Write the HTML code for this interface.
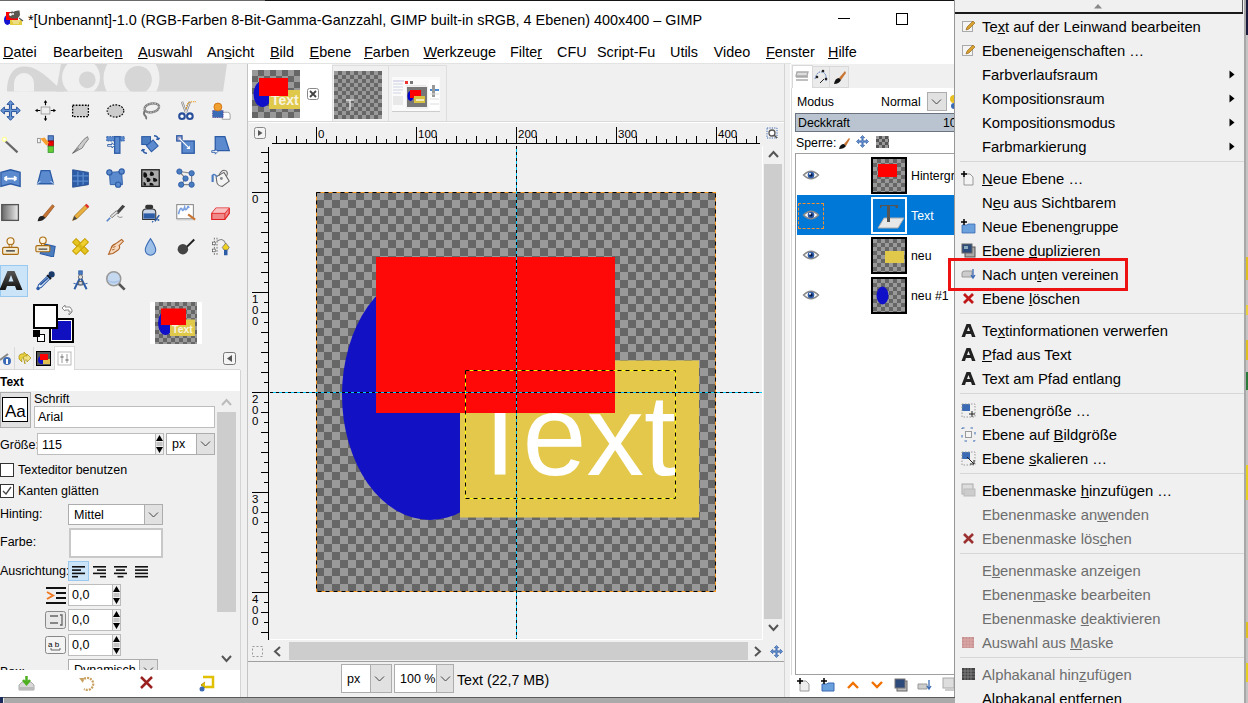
<!DOCTYPE html><html><head><meta charset="utf-8"><style>
*{margin:0;padding:0;box-sizing:border-box}
html,body{width:1248px;height:703px;overflow:hidden;background:#f0f0f0;font-family:"Liberation Sans", sans-serif}
body>div,body>span,body>svg{position:absolute}
.t{position:absolute;white-space:nowrap;line-height:1;}
u{text-decoration:underline;text-decoration-thickness:1px;text-underline-offset:0.6px}
</style></head><body>
<div style="left:0px;top:0px;width:955px;height:38px;background:#fff"></div>
<div style="left:0px;top:0px;width:265px;height:1px;background:#6a6a6a"></div>
<div style="left:265px;top:0px;width:690px;height:1px;background:#141414"></div>
<div style="left:0px;top:38px;width:955px;height:25px;background:#fff"></div>
<div style="left:0px;top:63px;width:955px;height:1px;background:#e3e3e3"></div>
<svg style="left:0px;top:6px" width="26" height="22" viewBox="0 0 26 22">
<ellipse cx="7.5" cy="14" rx="3.5" ry="5" fill="#1414d0"/><rect x="6" y="6" width="12" height="8" fill="#f00"/>
<rect x="10" y="14" width="12" height="5" fill="#e4cc40"/><path d="M12 15 h8 M13 17 h6" stroke="#f4f0c0" stroke-width="1"/>
<path d="M8.5 9 Q10 5 12 6 L11.5 4.5 L13 6 Q16 4 19.5 4.5 L20 9 Q19 12 17 12.5 L12 12.5 Q9 12 8.5 9Z" fill="#5a5650"/>
<circle cx="10.5" cy="8.5" r="1.4" fill="#fff"/><circle cx="13" cy="8" r="1" fill="#fff"/><path d="M19 12 L23 15" stroke="#555" stroke-width="1.2"/></svg>
<span class="t" style="left:28px;top:12.81px;font-size:14.4px;color:#000;">*[Unbenannt]-1.0 (RGB-Farben 8-Bit-Gamma-Ganzzahl, GIMP built-in sRGB, 4 Ebenen) 400x400 – GIMP</span>
<div style="left:838px;top:18px;width:12px;height:1px;background:#000"></div>
<div style="left:896px;top:13px;width:12px;height:12px;border:1px solid #000"></div>
<span class="t" style="left:3px;top:44.81px;font-size:14.4px;color:#000;"><u>D</u>atei</span>
<span class="t" style="left:53px;top:44.81px;font-size:14.4px;color:#000;">Bearbeite<u>n</u></span>
<span class="t" style="left:138px;top:44.81px;font-size:14.4px;color:#000;"><u>A</u>uswahl</span>
<span class="t" style="left:207px;top:44.81px;font-size:14.4px;color:#000;">An<u>s</u>icht</span>
<span class="t" style="left:270px;top:44.81px;font-size:14.4px;color:#000;"><u>B</u>ild</span>
<span class="t" style="left:309.6px;top:44.81px;font-size:14.4px;color:#000;"><u>E</u>bene</span>
<span class="t" style="left:364px;top:44.81px;font-size:14.4px;color:#000;"><u>F</u>arben</span>
<span class="t" style="left:423.5px;top:44.81px;font-size:14.4px;color:#000;"><u>W</u>erkzeuge</span>
<span class="t" style="left:510px;top:44.81px;font-size:14.4px;color:#000;">Filte<u>r</u></span>
<span class="t" style="left:557px;top:44.81px;font-size:14.4px;color:#000;">CFU</span>
<span class="t" style="left:597px;top:44.81px;font-size:14.4px;color:#000;">Script-Fu</span>
<span class="t" style="left:670px;top:44.81px;font-size:14.4px;color:#000;">Utils</span>
<span class="t" style="left:713.7px;top:44.81px;font-size:14.4px;color:#000;">Video</span>
<span class="t" style="left:766px;top:44.81px;font-size:14.4px;color:#000;"><u>F</u>enster</span>
<span class="t" style="left:828px;top:44.81px;font-size:14.4px;color:#000;"><u>H</u>ilfe</span>
<svg style="left:0px;top:64px" width="240" height="28" viewBox="0 0 240 28">
<defs><clipPath id="wc"><rect x="0" y="0" width="240" height="27.5"/></clipPath></defs>
<g clip-path="url(#wc)">
<path d="M7 28 C7 12 13 2.5 24 2.5 C36 2.5 44 10 56 21 L64 28Z" fill="#d6d6d6"/>
<path d="M61 0 L227 0 L223 28 L56 28Z" fill="#d6d6d6"/>
<circle cx="24" cy="19" r="10" fill="#f0f0f0"/><rect x="14" y="19" width="20" height="10" fill="#f0f0f0"/>
<circle cx="81" cy="13.4" r="19" fill="#f0f0f0"/>
<circle cx="131.5" cy="14.3" r="28" fill="#f0f0f0"/>
<circle cx="87.3" cy="15.8" r="8.4" fill="#d6d6d6"/>
<circle cx="138.2" cy="15.8" r="13.7" fill="#d6d6d6"/>
</g></svg>
<div style="left:0px;top:265px;width:28px;height:32px;background:#cce4f7;border:1px solid #99c9ef"></div>
<svg style="left:0.0px;top:100.0px" width="21" height="21" viewBox="0 0 24 24"><path d="M12 0.8 L16 5 L13.2 5 L13.2 10.8 L19 10.8 L19 8 L23.2 12 L19 16 L19 13.2 L13.2 13.2 L13.2 19 L16 19 L12 23.2 L8 19 L10.8 19 L10.8 13.2 L5 13.2 L5 16 L0.8 12 L5 8 L5 10.8 L10.8 10.8 L10.8 5 L8 5Z" fill="#6a96d4" stroke="#22509a" stroke-width="1.1" stroke-linejoin="miter"/></svg>
<svg style="left:35.0px;top:100.0px" width="21" height="21" viewBox="0 0 24 24"><rect x="7" y="8" width="10" height="8" fill="#eee" stroke="#999"/><path d="M12 1 V6 M12 18 V23 M1 12 H6 M18 12 H23" stroke="#000" stroke-width="1.3"/><path d="M10 3 L12 0 L14 3Z M10 21 L12 24 L14 21Z M3 10 L0 12 L3 14Z M21 10 L24 12 L21 14Z" fill="#000"/></svg>
<svg style="left:70.0px;top:100.0px" width="21" height="21" viewBox="0 0 24 24"><rect x="3" y="6" width="18" height="13" fill="#ccc" stroke="#000" stroke-width="1.5" stroke-dasharray="2 1.5"/></svg>
<svg style="left:105.0px;top:100.0px" width="21" height="21" viewBox="0 0 24 24"><ellipse cx="12" cy="12.5" rx="9.5" ry="7" fill="#ccc" stroke="#000" stroke-width="1.3" stroke-dasharray="2 1.5"/></svg>
<svg style="left:140.0px;top:100.0px" width="21" height="21" viewBox="0 0 24 24"><ellipse cx="13.5" cy="9" rx="8.5" ry="5" fill="none" stroke="#777" stroke-width="2.6" transform="rotate(-12 13.5 9)"/><ellipse cx="13.5" cy="9" rx="8.5" ry="5" fill="none" stroke="#ddd" stroke-width="1" stroke-dasharray="1.5 1.5" transform="rotate(-12 13.5 9)"/><path d="M6 12 Q3 15 6 18 Q8 20 7 22" stroke="#777" stroke-width="2.2" fill="none"/></svg>
<svg style="left:175.0px;top:100.0px" width="21" height="21" viewBox="0 0 24 24"><path d="M8 2 L12.5 14 M17 2 L12.5 14" stroke="#888" stroke-width="2.6"/><path d="M8 2 L12.5 14 M17 2 L12.5 14" stroke="#eee" stroke-width="1"/><path d="M13 10 Q13 2 20 2 L24 2" stroke="#e8900a" stroke-width="1.2" stroke-dasharray="1.5 1" fill="none"/><circle cx="8" cy="18.5" r="3.2" fill="#fff" stroke="#2a4f9a" stroke-width="2.4"/><circle cx="17" cy="18.5" r="3.2" fill="#fff" stroke="#2a4f9a" stroke-width="2.4"/></svg>
<svg style="left:210.0px;top:100.0px" width="21" height="21" viewBox="0 0 24 24"><path d="M14 14 h6 q3 0 3 3 v5 h-9Z" fill="#fff" stroke="#999"/><rect x="3" y="12" width="12" height="8" fill="#3b6bb5" stroke="#5a3a8a" stroke-dasharray="1 1"/><circle cx="9" cy="8" r="4.5" fill="#f0a030" stroke="#d07010"/></svg>
<svg style="left:0.0px;top:134.0px" width="21" height="21" viewBox="0 0 24 24"><path d="M6 8 L20 21" stroke="#666" stroke-width="2.5"/><circle cx="5" cy="6" r="3" fill="#ffff99"/><circle cx="5" cy="6" r="1.5" fill="#fff"/></svg>
<svg style="left:35.0px;top:134.0px" width="21" height="21" viewBox="0 0 24 24"><rect x="15" y="2" width="6" height="6" fill="#5b86c8" stroke="#234a90"/><rect x="15" y="8" width="6" height="6" fill="#e00" stroke="#900"/><rect x="15" y="14" width="6" height="7" fill="#6c3" stroke="#393"/><rect x="3" y="5" width="3" height="5" fill="#fff" stroke="#888"/><path d="M6 5 L11 4 L16 10 L13 13Z" fill="#f7a030"/></svg>
<svg style="left:70.0px;top:134.0px" width="21" height="21" viewBox="0 0 24 24"><path d="M3 22 L11 12 L16 6 L20 3 L21 6 L17 11 L14 16Z" fill="#ccc" stroke="#777"/><path d="M3 22 L10 16" stroke="#555"/></svg>
<svg style="left:105.0px;top:134.0px" width="21" height="21" viewBox="0 0 24 24"><rect x="2" y="3" width="20" height="5" fill="#5b8ace" stroke="#2d5ca6" stroke-dasharray="2 1"/><rect x="11" y="3" width="6" height="19" fill="#5b8ace" stroke="#2d5ca6" stroke-width="1.5"/><path d="M3 12 h5 v-2 l3 3 l-3 3 v-2 h-5Z" fill="#fff" stroke="#2d5ca6"/></svg>
<svg style="left:140.0px;top:134.0px" width="21" height="21" viewBox="0 0 24 24"><rect x="2" y="3" width="10" height="9" fill="#4a7cc0" stroke="#2d5ca6" stroke-width="1.2"/><rect x="9" y="9" width="10" height="9" fill="#5b8ace" stroke="#2d5ca6" stroke-width="1.2" transform="rotate(-40 14 13.5)"/><path d="M16 2 q4 0 5 4 l1.5 -1.5 M21 6 l-2.5 0" stroke="#2d5ca6" fill="none" stroke-width="1.6"/><path d="M8 22 q-4 0 -5 -4 l-1.5 1.5 M3 18 l2.5 0" stroke="#2d5ca6" fill="none" stroke-width="1.6"/></svg>
<svg style="left:175.0px;top:134.0px" width="21" height="21" viewBox="0 0 24 24"><rect x="8" y="8" width="14" height="14" fill="#5b8ace" stroke="#2d5ca6" stroke-width="1.5"/><rect x="2" y="2" width="6" height="6" fill="#aac" stroke="#2d5ca6" stroke-width="1.5"/><path d="M5 5 L17 17" stroke="#fff" stroke-width="1.5"/><path d="M17 17 l-4 0 l4 -4Z" fill="#fff"/></svg>
<svg style="left:210.0px;top:134.0px" width="21" height="21" viewBox="0 0 24 24"><path d="M6 3 L17 3 L22 19 L6 19Z" fill="#5b8ace" stroke="#2d5ca6" stroke-width="1.5"/><path d="M2 19 h4 v-2 l3 3 l-3 3 v-2 h-4Z" fill="#fff" stroke="#2d5ca6"/></svg>
<svg style="left:0.0px;top:168.0px" width="21" height="21" viewBox="0 0 24 24"><path d="M1 5 L12 2 L23 5 L23 21 L12 18 L1 21Z" fill="#5b8ace" stroke="#2d5ca6" stroke-width="1.5"/><path d="M5 12 h14 M5 12 l3 -2.5 M5 12 l3 2.5 M19 12 l-3 -2.5 M19 12 l-3 2.5" stroke="#fff" stroke-width="2"/></svg>
<svg style="left:35.0px;top:168.0px" width="21" height="21" viewBox="0 0 24 24"><path d="M7 3 L17 3 L21 18 L3 18Z" fill="#5b8ace" stroke="#2d5ca6" stroke-width="1.5"/><path d="M3 18 l3 -3 M21 18 l-3 -3" stroke="#fff"/></svg>
<svg style="left:70.0px;top:168.0px" width="21" height="21" viewBox="0 0 24 24"><path d="M3 2 L21 5 L21 19 L3 22Z" fill="#2d5ca6" stroke="#234a90"/><path d="M9 4 v16 M15 5 v14 M3 9 h18 M3 15 h18" stroke="#5b8ace" stroke-width="1.5"/></svg>
<svg style="left:105.0px;top:168.0px" width="21" height="21" viewBox="0 0 24 24"><path d="M5 5 L19 4 L20 19 L6 19Z" fill="#5b8ace" stroke="#2d5ca6"/><circle cx="5" cy="5" r="3" fill="#5b8ace" stroke="#2d5ca6" stroke-width="1.3"/><circle cx="19" cy="4" r="3" fill="#5b8ace" stroke="#2d5ca6" stroke-width="1.3"/><circle cx="15" cy="19" r="3" fill="#5b8ace" stroke="#2d5ca6" stroke-width="1.3"/></svg>
<svg style="left:140.0px;top:168.0px" width="21" height="21" viewBox="0 0 24 24"><rect x="2" y="2" width="20" height="19" fill="#aaa" stroke="#222" stroke-width="1.5"/><path d="M4 5 q3 -1 4 2 q1 3 -2 4 q-3 0 -2 -6Z M12 4 q4 0 4 4 q-3 2 -5 0Z M7 11 q3 -1 5 2 q0 3 -4 3Z M15 11 q4 0 5 3 q-2 3 -5 1Z M4 16 q3 0 3 4 h-3Z M11 17 q4 -1 5 3 h-5Z" fill="#111"/></svg>
<svg style="left:175.0px;top:168.0px" width="21" height="21" viewBox="0 0 24 24"><path d="M5 4 L19 6 L19 19 L7 19 L12 12 L5 4Z" fill="none" stroke="#888" stroke-width="1.4"/><circle cx="5" cy="4" r="3" fill="#4a7cc0" stroke="#2d5ca6"/><circle cx="19" cy="6" r="3" fill="#4a7cc0" stroke="#2d5ca6"/><circle cx="12" cy="12" r="3" fill="#4a7cc0" stroke="#2d5ca6"/><circle cx="7" cy="19" r="3" fill="#4a7cc0" stroke="#2d5ca6"/><circle cx="19" cy="19" r="3" fill="#4a7cc0" stroke="#2d5ca6"/></svg>
<svg style="left:210.0px;top:168.0px" width="21" height="21" viewBox="0 0 24 24"><path d="M7 10 L16 5 L22 15 L14 21 Q10 21 8 17Z" fill="#f4f4f4" stroke="#666" stroke-width="1.2"/><path d="M10 9 Q13 1 18 3 Q21 5 19 9" fill="none" stroke="#666" stroke-width="1.2"/><circle cx="13" cy="12" r="1.6" fill="#888"/><path d="M3 8 v8" stroke="#4a7cc0" stroke-width="2.5"/><path d="M3 8 Q5 6 8 10" stroke="#4a7cc0" stroke-width="1.5" fill="none"/></svg>
<svg style="left:0.0px;top:202.0px" width="21" height="21" viewBox="0 0 24 24"><defs><linearGradient id="g1"><stop offset="0" stop-color="#666"/><stop offset="1" stop-color="#eee"/></linearGradient></defs><rect x="2" y="3" width="19" height="18" fill="url(#g1)" stroke="#555" stroke-width="1.5"/></svg>
<svg style="left:35.0px;top:202.0px" width="21" height="21" viewBox="0 0 24 24"><path d="M9 16 L20 3 L22 5 L12 18Z" fill="#c87533" stroke="#8a4a1a" stroke-width=".8"/><path d="M3 22 Q4 15 9 16 L12 18 Q9 22 3 22Z" fill="#222"/></svg>
<svg style="left:70.0px;top:202.0px" width="21" height="21" viewBox="0 0 24 24"><path d="M3 21 L5 16 L18 3 L21 6 L8 19Z" fill="#e8b040" stroke="#9a6a10" stroke-width=".8"/><path d="M17 4 L20 7 L22 5 L19 2Z" fill="#e03030"/><path d="M3 21 L5 16 L8 19Z" fill="#444"/></svg>
<svg style="left:105.0px;top:202.0px" width="21" height="21" viewBox="0 0 24 24"><path d="M12 12 L20 3 L23 5 L15 14Z" fill="#444"/><path d="M6 16 L13 10 L15 12 L8 18Z" fill="#ddd" stroke="#777"/><path d="M2 22 L6 18" stroke="#5b86c8" stroke-width="2"/><path d="M14 16 q3 3 6 1" stroke="#888" fill="none"/></svg>
<svg style="left:140.0px;top:202.0px" width="21" height="21" viewBox="0 0 24 24"><rect x="6" y="3" width="9" height="5" rx="2" fill="#333"/><path d="M3 12 Q3 8 7 8 L14 8 Q18 8 18 12 L18 20 L3 20Z" fill="#c8d4e8" stroke="#333" stroke-width="1.2"/><rect x="4" y="13" width="13" height="6" fill="#2d5ca6"/><path d="M17 22 L22 15 M20 20 l2 1 M15 23 l-1 -1" stroke="#2d5ca6" stroke-width="1.8"/></svg>
<svg style="left:175.0px;top:202.0px" width="21" height="21" viewBox="0 0 24 24"><rect x="2" y="3" width="19" height="16" fill="#fff" stroke="#888" stroke-width="1.2"/><rect x="2" y="19" width="19" height="2" fill="#ccc"/><path d="M4 14 q2 -9 4 -6 q1 4 3 -2 q1 5 3 1 q1 -4 2 0" stroke="#7aa0e0" stroke-width="1.8" fill="none"/><path d="M15 14 L23 20" stroke="#c87533" stroke-width="2.5"/></svg>
<svg style="left:210.0px;top:202.0px" width="21" height="21" viewBox="0 0 24 24"><path d="M2 13 L7 7 L22 7 L22 13 L17 20 L2 20Z" fill="#f08a8a" stroke="#e02020" stroke-width="1.4" stroke-linejoin="round"/><path d="M7 7 L22 7 L17 13 L2 13Z" fill="#f8c0c0"/><path d="M2 13 L17 13 L22 7 M17 13 L17 20" stroke="#e02020" fill="none" stroke-width="1"/></svg>
<svg style="left:0.0px;top:236.0px" width="21" height="21" viewBox="0 0 24 24"><circle cx="12" cy="6" r="4" fill="#fff4e0" stroke="#a86a10" stroke-width="1.3"/><rect x="10.5" y="9.5" width="3" height="4" fill="#f4e4c0" stroke="#a86a10"/><rect x="3" y="13" width="18" height="8" rx="1.5" fill="#f4ead0" stroke="#a86a10" stroke-width="1.3"/><path d="M7 17 h10" stroke="#333" stroke-width="1.5"/></svg>
<svg style="left:35.0px;top:236.0px" width="21" height="21" viewBox="0 0 24 24"><path d="M10 9 L23 12 L21 24 L6 20Z" fill="#4a7cc0" stroke="#2d5ca6" stroke-width="1.3"/><circle cx="9" cy="5" r="3.8" fill="#fff4e0" stroke="#a86a10" stroke-width="1.3"/><rect x="7.5" y="8.5" width="3" height="3" fill="#f4e4c0" stroke="#a86a10"/><rect x="1" y="11" width="16" height="7" rx="1.5" fill="#f4ead0" stroke="#a86a10" stroke-width="1.3"/><path d="M4 15 h10" stroke="#333" stroke-width="1.3"/></svg>
<svg style="left:70.0px;top:236.0px" width="21" height="21" viewBox="0 0 24 24"><path d="M3 7 L7 3 L21 17 L17 21Z" fill="#e6c520" stroke="#c8a000" stroke-width="1.2" stroke-linejoin="round"/><path d="M17 3 L21 7 L7 21 L3 17Z" fill="#f0d030" stroke="#c8a000" stroke-width="1.2" stroke-linejoin="round"/><rect x="10" y="10" width="4" height="4" fill="#d8b818" transform="rotate(45 12 12)"/></svg>
<svg style="left:105.0px;top:236.0px" width="21" height="21" viewBox="0 0 24 24"><path d="M4 21 L7 14 Q8 10 12 9 L19 4 L21 6 L16 11 Q18 13 15 16 L9 20Z" fill="#f5d8c0" stroke="#b06020" stroke-width="1.2"/><path d="M9 13 L12 12 M8 16 L11 15" stroke="#b06020"/></svg>
<svg style="left:140.0px;top:236.0px" width="21" height="21" viewBox="0 0 24 24"><path d="M12 3 Q18 12 18 16 A6 6 0 0 1 6 16 Q6 12 12 3Z" fill="#9cc0e8" stroke="#3b6bb5" stroke-width="1.2"/></svg>
<svg style="left:175.0px;top:236.0px" width="21" height="21" viewBox="0 0 24 24"><path d="M11 15 L22 4" stroke="#222" stroke-width="2.2"/><circle cx="9" cy="15" r="6" fill="#444"/></svg>
<svg style="left:210.0px;top:236.0px" width="21" height="21" viewBox="0 0 24 24"><path d="M5 2 v20 M8 2 v20" stroke="#666" stroke-width="1" stroke-dasharray="2 1.5"/><rect x="3" y="7" width="3" height="3" fill="#fff" stroke="#555" stroke-width=".8"/><rect x="3" y="15" width="3" height="3" fill="#fff" stroke="#555" stroke-width=".8"/><path d="M8 6 Q15 1 18 9" stroke="#888" fill="none" stroke-width="1.2"/><path d="M18 8 L22 13 L20 16 L16 16 L14 13Z" fill="#f0d020" stroke="#666" stroke-width=".8"/><rect x="16" y="16" width="4" height="6" fill="#2d5ca6"/></svg>
<svg style="left:-1.0px;top:268.5px" width="24" height="24" viewBox="0 0 24 24"><defs><linearGradient id="ga" x1="0" y1="0" x2="0" y2="1"><stop offset="0" stop-color="#555"/><stop offset="1" stop-color="#111"/></linearGradient></defs><path d="M0.5 21 L8.5 2 L15.5 2 L23.5 21 L17.5 21 L16 17 L8 17 L6.5 21Z M9.5 12.5 L14.5 12.5 L12 6Z" fill="url(#ga)" fill-rule="evenodd"/></svg>
<svg style="left:35.0px;top:270.0px" width="21" height="21" viewBox="0 0 24 24"><path d="M14 7 L17 10 L7 20 L4 21 L3 20 L4 17Z" fill="#e8eef8" stroke="#2d5ca6" stroke-width="1.2"/><path d="M6 17 L15 9" stroke="#2d5ca6" stroke-width="2"/><path d="M13 6 L18 11 L19 9 L15 5Z" fill="#111"/><circle cx="19" cy="5" r="3.5" fill="#1a3a6a"/><circle cx="3.5" cy="21" r="2" fill="#2d5ca6"/></svg>
<svg style="left:70.0px;top:270.0px" width="21" height="21" viewBox="0 0 24 24"><rect x="10" y="1" width="4" height="4" fill="#4a7cc0" stroke="#2d5ca6"/><circle cx="12" cy="8" r="2.5" fill="#ddd" stroke="#666"/><path d="M11 10 L5 22 M13 10 L19 22" stroke="#2d5ca6" stroke-width="2.2"/><path d="M4 15 Q12 19 20 15" stroke="#2d5ca6" fill="none" stroke-width="1.2"/><rect x="10" y="13" width="4" height="4" fill="#ddd" stroke="#555"/></svg>
<svg style="left:105.0px;top:270.0px" width="21" height="21" viewBox="0 0 24 24"><circle cx="10" cy="10" r="8" fill="#c4d8f0" stroke="#999" stroke-width="1.8"/><path d="M3 11 Q10 15 17 11 L17 12 Q10 18 3 12Z" fill="#a8c4e8"/><path d="M16 16 L22.5 22.5" stroke="#555" stroke-width="3"/></svg>
<div style="left:49px;top:318px;width:25px;height:25px;background:#1010c0;border:2px solid #000;box-shadow:inset 0 0 0 1px #fff"></div>
<div style="left:33px;top:304px;width:25px;height:25px;background:#fff;border:2px solid #000"></div>
<svg style="left:60px;top:303px" width="14" height="14" viewBox="0 0 14 14"><path d="M2 5 L5 2 L5 4 L10 4 L12 7 L12 9 L9 9 L9 7 L5 7 L5 8Z" fill="#fff" stroke="#888"/><path d="M12 9 L9 12 L9 10" fill="none" stroke="#888"/></svg>
<div style="left:37px;top:334px;width:8px;height:8px;border:1px solid #000;background:#fff"></div>
<div style="left:33px;top:330px;width:7px;height:7px;background:#000"></div>
<div style="left:150px;top:302px;width:52px;height:42px;background:#fff"></div>
<div style="left:155px;top:302px;width:42px;height:42px;background:conic-gradient(#666 25%,#999 0 50%,#666 0 75%,#999 0) 0 0/8px 8px"></div>
<svg style="left:155px;top:302px" width="42" height="42" viewBox="0 0 42 42"><ellipse cx="10.5" cy="21" rx="7.5" ry="12" fill="#1010c8"/><rect x="15" y="17.5" width="25" height="16.5" fill="#e0c84a"/><text x="17" y="31" font-size="10.5" font-weight="bold" fill="#f8f4e0" font-family="Liberation Sans">Text</text><rect x="6" y="6.5" width="25" height="16.5" fill="#f00"/></svg>
<div style="left:0px;top:346px;width:240px;height:24px;background:#f0f0f0"></div>
<div style="left:0px;top:369px;width:240px;height:1px;background:#d9d9d9"></div>
<div style="left:14px;top:347px;width:1px;height:23px;background:#d9d9d9"></div>
<div style="left:33px;top:347px;width:1px;height:23px;background:#d9d9d9"></div>
<div style="left:54px;top:346px;width:21px;height:24px;background:#fff;border:1px solid #d9d9d9;border-bottom:none"></div>
<svg style="left:0px;top:350px" width="14" height="16" viewBox="0 0 14 16"><path d="M0 10 L8 4" stroke="#888" stroke-width="2"/><circle cx="7" cy="11" r="4" fill="#3b6bb5"/><rect x="6" y="9" width="2" height="5" fill="#fff"/></svg>
<svg style="left:16px;top:350px" width="16" height="16" viewBox="0 0 16 16"><path d="M3 9 Q2 3 8 4 L8 2 L12 6 L8 10 L8 8 Q5 7 6 12Z" fill="#e8d040" stroke="#a89010" stroke-width=".7"/><path d="M8 10 Q6 5 11 6 L11 4 L15 8 L11 12 L11 10 Q8 9 9 14Z" fill="#f0e080" stroke="#a89010" stroke-width=".7"/></svg>
<div style="left:36px;top:351px;width:15px;height:15px;background:#555;border:1.5px solid #000"></div>
<svg style="left:38px;top:353px" width="12" height="12" viewBox="0 0 12 12"><circle cx="4" cy="7" r="4" fill="#1010c8"/><rect x="5" y="6" width="7" height="5" fill="#e0c050"/><rect x="2" y="1" width="8" height="6" fill="#f00"/></svg>
<svg style="left:57px;top:351px" width="15" height="15" viewBox="0 0 15 15"><rect x="1" y="1" width="13" height="13" fill="none" stroke="#bbb"/><path d="M5 3 v9 M10 3 v9" stroke="#999"/><rect x="3.5" y="5" width="3" height="2" fill="#999"/><rect x="8.5" y="8" width="3" height="2" fill="#999"/></svg>
<svg style="left:223px;top:352px" width="13" height="13" viewBox="0 0 13 13"><rect x="0.5" y="0.5" width="12" height="12" rx="2" fill="#f4f4f4" stroke="#777"/><path d="M9 3 L4 6.5 L9 10Z" fill="#555"/></svg>
<div style="left:0px;top:370px;width:240px;height:21px;background:#fff"></div>
<span class="t" style="left:0px;top:375.84px;font-size:12px;color:#000;font-weight:bold">Text</span>
<div style="left:0px;top:391px;width:215px;height:279px;background:#f0f0f0"></div>
<div style="left:216px;top:391px;width:21px;height:279px;background:#f0f0f0"></div>
<div style="left:217px;top:412px;width:19px;height:200px;background:#cdcdcd"></div>
<svg style="left:220px;top:397px" width="13" height="10" viewBox="0 0 13 10"><path d="M2 8 L6.5 3 L11 8" fill="none" stroke="#bbb" stroke-width="2"/></svg>
<svg style="left:220px;top:654px" width="13" height="10" viewBox="0 0 13 10"><path d="M2 2 L6.5 7 L11 2" fill="none" stroke="#555" stroke-width="2"/></svg>
<div style="left:240px;top:370px;width:1px;height:327px;background:#d4d4d4"></div>
<div style="left:0px;top:392px;width:31px;height:36px;background:#e1e1e1;border:1px solid #adadad"></div>
<div style="left:2px;top:397px;width:26px;height:25px;background:#fff;border:1px solid #000"></div>
<span class="t" style="left:5px;top:402.61px;font-size:17px;color:#000;">Aa</span>
<span class="t" style="left:34px;top:393.42px;font-size:12.5px;color:#000;">Schrift</span>
<div style="left:34px;top:406px;width:181px;height:22px;background:#fff;border:1px solid #bdbdbd"></div>
<span class="t" style="left:38px;top:411.42px;font-size:12.5px;color:#000;">Arial</span>
<span class="t" style="left:0px;top:439.42px;font-size:12.5px;color:#000;">Größe:</span>
<div style="left:37px;top:433px;width:119px;height:22px;background:#fff;border:1px solid #bdbdbd;border-right:none"></div>
<span class="t" style="left:42px;top:439.42px;font-size:12.5px;color:#000;">115</span>
<svg style="left:155px;top:433px" width="9" height="22" viewBox="0 0 9 22"><rect x="0.5" y="0.5" width="8" height="21" fill="#f0f0f0" stroke="#bbb"/><path d="M1 8 L4.5 2 L8 8Z M1 14 L4.5 20 L8 14Z" fill="#000"/><path d="M1.5 10 h6 M1.5 12 h6" stroke="#999"/></svg>
<div style="left:166px;top:433px;width:49px;height:22px;background:#fff;border:1px solid #adadad"></div>
<div style="left:196px;top:433px;width:19px;height:22px;background:#e1e1e1;border:1px solid #adadad"></div>
<svg style="left:200px;top:440.0px" width="11" height="8" viewBox="0 0 11 8"><path d="M1 1.5 L5.5 6 L10 1.5" fill="none" stroke="#444" stroke-width="1"/></svg>
<span class="t" style="left:172px;top:438.42px;font-size:12.5px;color:#000;">px</span>
<div style="left:0px;top:463px;width:14px;height:14px;background:#fff;border:1px solid #333"></div>
<span class="t" style="left:18px;top:464.42px;font-size:12.5px;color:#000;">Texteditor benutzen</span>
<div style="left:0px;top:484px;width:14px;height:14px;background:#fff;border:1px solid #333"></div>
<svg style="left:1px;top:485px" width="12" height="12" viewBox="0 0 12 12"><path d="M2 6 L5 9 L10 2" fill="none" stroke="#444" stroke-width="1.3"/></svg>
<span class="t" style="left:18px;top:485.42px;font-size:12.5px;color:#000;">Kanten glätten</span>
<span class="t" style="left:0px;top:508.42px;font-size:12.5px;color:#000;">Hinting:</span>
<div style="left:68px;top:504px;width:95px;height:21px;background:#fff;border:1px solid #adadad"></div>
<div style="left:144px;top:504px;width:19px;height:21px;background:#e1e1e1;border:1px solid #adadad"></div>
<svg style="left:148px;top:510.5px" width="11" height="8" viewBox="0 0 11 8"><path d="M1 1.5 L5.5 6 L10 1.5" fill="none" stroke="#444" stroke-width="1"/></svg>
<span class="t" style="left:74px;top:508.92px;font-size:12.5px;color:#000;">Mittel</span>
<span class="t" style="left:0px;top:536.42px;font-size:12.5px;color:#000;">Farbe:</span>
<div style="left:69px;top:528px;width:94px;height:30px;background:#fff;border:2px solid #c8c8c8"></div>
<span class="t" style="left:0px;top:565.42px;font-size:12.5px;color:#000;">Ausrichtung:</span>
<div style="left:68px;top:561px;width:21px;height:20px;background:#cce4f7;border:1px solid #99c9ef"></div>
<svg style="left:72px;top:566px" width="13" height="13" viewBox="0 0 13 13"><rect x="0" y="0.0" width="13" height="1.6" fill="#111"/><rect x="0" y="3.3" width="9" height="1.6" fill="#111"/><rect x="0" y="6.6" width="13" height="1.6" fill="#111"/><rect x="0" y="9.9" width="6" height="1.6" fill="#111"/></svg>
<svg style="left:93px;top:566px" width="13" height="13" viewBox="0 0 13 13"><rect x="0" y="0.0" width="13" height="1.6" fill="#111"/><rect x="4" y="3.3" width="9" height="1.6" fill="#111"/><rect x="0" y="6.6" width="13" height="1.6" fill="#111"/><rect x="7" y="9.9" width="6" height="1.6" fill="#111"/></svg>
<svg style="left:114px;top:566px" width="13" height="13" viewBox="0 0 13 13"><rect x="0" y="0.0" width="13" height="1.6" fill="#111"/><rect x="2" y="3.3" width="9" height="1.6" fill="#111"/><rect x="0" y="6.6" width="13" height="1.6" fill="#111"/><rect x="3.5" y="9.9" width="6" height="1.6" fill="#111"/></svg>
<svg style="left:135px;top:566px" width="13" height="13" viewBox="0 0 13 13"><rect x="0" y="0.0" width="13" height="1.6" fill="#111"/><rect x="0" y="3.3" width="13" height="1.6" fill="#111"/><rect x="0" y="6.6" width="13" height="1.6" fill="#111"/><rect x="0" y="9.9" width="13" height="1.6" fill="#111"/></svg>
<div style="left:68px;top:584px;width:44px;height:22px;background:#fff;border:1px solid #bdbdbd;border-right:none"></div>
<span class="t" style="left:72px;top:589.42px;font-size:12.5px;color:#000;">0,0</span>
<svg style="left:112px;top:584px" width="9" height="22" viewBox="0 0 9 22"><rect x="0.5" y="0.5" width="8" height="21" fill="#f0f0f0" stroke="#bbb"/><path d="M1 8 L4.5 2 L8 8Z M1 14 L4.5 20 L8 14Z" fill="#000"/><path d="M1.5 10 h6 M1.5 12 h6" stroke="#999"/></svg>
<div style="left:68px;top:609px;width:44px;height:22px;background:#fff;border:1px solid #bdbdbd;border-right:none"></div>
<span class="t" style="left:72px;top:614.42px;font-size:12.5px;color:#000;">0,0</span>
<svg style="left:112px;top:609px" width="9" height="22" viewBox="0 0 9 22"><rect x="0.5" y="0.5" width="8" height="21" fill="#f0f0f0" stroke="#bbb"/><path d="M1 8 L4.5 2 L8 8Z M1 14 L4.5 20 L8 14Z" fill="#000"/><path d="M1.5 10 h6 M1.5 12 h6" stroke="#999"/></svg>
<div style="left:68px;top:634px;width:44px;height:22px;background:#fff;border:1px solid #bdbdbd;border-right:none"></div>
<span class="t" style="left:72px;top:639.42px;font-size:12.5px;color:#000;">0,0</span>
<svg style="left:112px;top:634px" width="9" height="22" viewBox="0 0 9 22"><rect x="0.5" y="0.5" width="8" height="21" fill="#f0f0f0" stroke="#bbb"/><path d="M1 8 L4.5 2 L8 8Z M1 14 L4.5 20 L8 14Z" fill="#000"/><path d="M1.5 10 h6 M1.5 12 h6" stroke="#999"/></svg>
<svg style="left:46px;top:586px" width="20" height="19" viewBox="0 0 20 19"><rect x="0" y="1" width="20" height="2" fill="#111"/><rect x="10" y="6" width="10" height="2" fill="#111"/><rect x="10" y="11" width="10" height="2" fill="#111"/><rect x="0" y="16" width="20" height="2" fill="#111"/><path d="M1 6 L7 9.5 L1 13" fill="none" stroke="#f07820" stroke-width="2"/></svg>
<svg style="left:45px;top:611px" width="21" height="18" viewBox="0 0 21 18"><rect x=".5" y=".5" width="20" height="17" rx="2" fill="#e8e8e8" stroke="#888"/><path d="M5 5 h8 M5 12 h8 M15 4 h2 v10 h-2" stroke="#666" stroke-width="1.3" fill="none"/></svg>
<svg style="left:45px;top:636px" width="21" height="18" viewBox="0 0 21 18"><rect x=".5" y=".5" width="20" height="17" rx="2" fill="#f4f4f4" stroke="#888"/><text x="3" y="11" font-size="8" font-family="Liberation Sans" fill="#000">a  b</text><path d="M6 12 v2 h9 v-2" stroke="#666" fill="none"/></svg>
<span class="t" style="left:0px;top:666.42px;font-size:12.5px;color:#000;">Box:</span>
<div style="left:68px;top:659px;width:90px;height:22px;background:#fff;border:1px solid #adadad"></div>
<div style="left:139px;top:659px;width:19px;height:22px;background:#e1e1e1;border:1px solid #adadad"></div>
<svg style="left:143px;top:666.0px" width="11" height="8" viewBox="0 0 11 8"><path d="M1 1.5 L5.5 6 L10 1.5" fill="none" stroke="#444" stroke-width="1"/></svg>
<span class="t" style="left:74px;top:664.42px;font-size:12.5px;color:#000;">Dynamisch</span>
<div style="left:0px;top:670px;width:240px;height:27px;background:#fff"></div>
<svg style="left:18px;top:675px" width="17" height="17" viewBox="0 0 17 17"><path d="M1 10 L4 7 L13 7 L16 10 L16 15 L1 15Z" fill="#d8d8d8" stroke="#aaa"/><rect x="1" y="12" width="15" height="3" fill="#bbb"/><path d="M8.5 1 v7 M5 5 L8.5 9 L12 5" stroke="#4caf20" stroke-width="2.5" fill="none"/></svg>
<svg style="left:78px;top:675px" width="17" height="17" viewBox="0 0 17 17"><path d="M4 6 A6 6 0 1 1 6 14" fill="none" stroke="#c8a060" stroke-width="2.2" stroke-dasharray="2 1"/><path d="M1 3 L6 3 L5 8Z" fill="#c8a060"/></svg>
<svg style="left:139px;top:675px" width="15" height="15" viewBox="0 0 15 15"><path d="M2 2 L13 13 M13 2 L2 13" stroke="#9a2020" stroke-width="2.5"/></svg>
<svg style="left:198px;top:674px" width="18" height="18" viewBox="0 0 18 18"><path d="M5 3 h10 v10 h-8" fill="none" stroke="#e0c000" stroke-width="2.5"/><path d="M7 8 L3 11 L7 14" fill="#e0c000" stroke="#b09000"/><circle cx="4" cy="15" r="2.5" fill="#3b6bb5"/></svg>
<div style="left:241px;top:64px;width:7px;height:633px;background:#f0f0f0"></div>
<div style="left:247px;top:64px;width:1px;height:633px;background:#c4c4c4"></div>
<div style="left:248px;top:64px;width:537px;height:58px;background:#f0f0f0"></div>
<div style="left:248px;top:64px;width:84px;height:58px;background:#fff"></div>
<div style="left:252px;top:70px;width:48px;height:48px;background:conic-gradient(#666 25%,#999 0 50%,#666 0 75%,#999 0) 0 0/12px 12px"></div>
<svg style="left:252px;top:70px" width="48" height="48" viewBox="0 0 48 48"><ellipse cx="10.5" cy="24" rx="9" ry="13" fill="#1010c8"/><rect x="17" y="20" width="32" height="19" fill="#e0c84a"/><text x="19" y="35" font-size="14" font-weight="bold" fill="#f8f4e0" font-family="Liberation Sans">Text</text><rect x="7" y="8" width="29" height="18" fill="#f00"/></svg>
<svg style="left:307px;top:88px" width="12" height="12" viewBox="0 0 12 12"><rect x=".5" y=".5" width="11" height="11" rx="2" fill="#fff" stroke="#888"/><path d="M3 3 L9 9 M9 3 L3 9" stroke="#444" stroke-width="1.8"/></svg>
<div style="left:332px;top:65px;width:57px;height:57px;background:#f0f0f0;border:1px solid #dedede"></div>
<div style="left:334px;top:71px;width:48px;height:48px;background:conic-gradient(#666 25%,#999 0 50%,#666 0 75%,#999 0) 0 0/8px 8px"></div>
<svg style="left:334px;top:71px" width="48" height="48" viewBox="0 0 48 48"><path d="M12 29 h8 M16 29 v10" stroke="#ddd" stroke-width="1.5"/></svg>
<div style="left:388px;top:65px;width:59px;height:57px;background:#f0f0f0;border:1px solid #dedede"></div>
<svg style="left:392px;top:77px" width="48" height="35" viewBox="0 0 48 35"><rect x="0" y="0" width="48" height="35" fill="#fafafa"/><rect x="0" y="34" width="48" height="1" fill="#ccc"/>
<rect x="1" y="3" width="11" height="2" fill="#dde"/><path d="M1 7 h10 M1 10 h10 M1 13 h10 M1 16 h8" stroke="#cdd6e2" stroke-width="1.2"/><rect x="1" y="19" width="10" height="9" fill="#e8e8e8"/>
<rect x="13" y="4" width="3" height="3" fill="#e33"/><rect x="18" y="4" width="3" height="3" fill="#777"/><rect x="14" y="8" width="20" height="1" fill="#e6e6e6"/>
<rect x="14" y="9" width="22" height="23" fill="#f0f0f0"/><rect x="15" y="10" width="20" height="20" fill="#777"/>
<ellipse cx="18.5" cy="19" rx="3" ry="5" fill="#00c"/><rect x="18" y="13" width="11" height="8" fill="#f00"/><rect x="22" y="19" width="11" height="7" fill="#d8c040"/><path d="M24 23 h8" stroke="#fff" stroke-width="1.3"/>
<rect x="37" y="3" width="10" height="30" fill="#fff"/><rect x="38" y="12" width="9" height="2" fill="#4a8ad0"/><rect x="40" y="8" width="3" height="12" fill="#999"/><path d="M38 17 h9 M38 22 h9 M38 27 h9" stroke="#ddd"/></svg>
<div style="left:248px;top:121px;width:537px;height:1px;background:#d8d8d8"></div>
<div style="left:248px;top:122px;width:537px;height:519px;background:#f0f0f0"></div>
<div style="left:249px;top:122px;width:535px;height:1px;background:#fff"></div>
<svg style="left:254px;top:127px" width="12" height="12" viewBox="0 0 12 12"><rect x=".5" y=".5" width="11" height="11" rx="2" fill="#f4f4f4" stroke="#888"/><path d="M4 3 L8.5 6 L4 9Z" fill="#555"/></svg>
<svg style="left:766px;top:127px" width="13" height="13" viewBox="0 0 13 13"><rect x="1" y="1" width="10" height="10" fill="none" stroke="#3b6bb5" stroke-dasharray="1.2 1.2"/><circle cx="6" cy="6" r="3" fill="#fff" stroke="#555" stroke-width="1.3"/><path d="M8 8 L11 11" stroke="#555" stroke-width="1.6"/></svg>
<svg style="left:0px;top:0px" width="1248" height="703" viewBox="0 0 1248 703"><rect x="272" y="143" width="488" height="1" fill="#000"/><rect x="276" y="136" width="1" height="7" fill="#000"/><rect x="286" y="139" width="1" height="4" fill="#000"/><rect x="296" y="136" width="1" height="7" fill="#000"/><rect x="306" y="139" width="1" height="4" fill="#000"/><rect x="316" y="127" width="1" height="16" fill="#000"/><rect x="326" y="139" width="1" height="4" fill="#000"/><rect x="336" y="136" width="1" height="7" fill="#000"/><rect x="346" y="139" width="1" height="4" fill="#000"/><rect x="356" y="136" width="1" height="7" fill="#000"/><rect x="366" y="139" width="1" height="4" fill="#000"/><rect x="376" y="136" width="1" height="7" fill="#000"/><rect x="386" y="139" width="1" height="4" fill="#000"/><rect x="396" y="136" width="1" height="7" fill="#000"/><rect x="406" y="139" width="1" height="4" fill="#000"/><rect x="416" y="127" width="1" height="16" fill="#000"/><rect x="426" y="139" width="1" height="4" fill="#000"/><rect x="436" y="136" width="1" height="7" fill="#000"/><rect x="446" y="139" width="1" height="4" fill="#000"/><rect x="456" y="136" width="1" height="7" fill="#000"/><rect x="466" y="139" width="1" height="4" fill="#000"/><rect x="476" y="136" width="1" height="7" fill="#000"/><rect x="486" y="139" width="1" height="4" fill="#000"/><rect x="496" y="136" width="1" height="7" fill="#000"/><rect x="506" y="139" width="1" height="4" fill="#000"/><rect x="516" y="127" width="1" height="16" fill="#000"/><rect x="526" y="139" width="1" height="4" fill="#000"/><rect x="536" y="136" width="1" height="7" fill="#000"/><rect x="546" y="139" width="1" height="4" fill="#000"/><rect x="556" y="136" width="1" height="7" fill="#000"/><rect x="566" y="139" width="1" height="4" fill="#000"/><rect x="576" y="136" width="1" height="7" fill="#000"/><rect x="586" y="139" width="1" height="4" fill="#000"/><rect x="596" y="136" width="1" height="7" fill="#000"/><rect x="606" y="139" width="1" height="4" fill="#000"/><rect x="616" y="127" width="1" height="16" fill="#000"/><rect x="626" y="139" width="1" height="4" fill="#000"/><rect x="636" y="136" width="1" height="7" fill="#000"/><rect x="646" y="139" width="1" height="4" fill="#000"/><rect x="656" y="136" width="1" height="7" fill="#000"/><rect x="666" y="139" width="1" height="4" fill="#000"/><rect x="676" y="136" width="1" height="7" fill="#000"/><rect x="686" y="139" width="1" height="4" fill="#000"/><rect x="696" y="136" width="1" height="7" fill="#000"/><rect x="706" y="139" width="1" height="4" fill="#000"/><rect x="716" y="127" width="1" height="16" fill="#000"/><rect x="726" y="139" width="1" height="4" fill="#000"/><rect x="736" y="136" width="1" height="7" fill="#000"/><rect x="746" y="139" width="1" height="4" fill="#000"/><rect x="756" y="136" width="1" height="7" fill="#000"/><text x="318" y="137.5" font-size="11.5" font-family="Liberation Sans" fill="#000">0</text><text x="418" y="137.5" font-size="11.5" font-family="Liberation Sans" fill="#000">100</text><text x="518" y="137.5" font-size="11.5" font-family="Liberation Sans" fill="#000">200</text><text x="618" y="137.5" font-size="11.5" font-family="Liberation Sans" fill="#000">300</text><text x="718" y="137.5" font-size="11.5" font-family="Liberation Sans" fill="#000">400</text><rect x="268" y="147" width="1" height="493" fill="#000"/><rect x="261" y="152" width="7" height="1" fill="#000"/><rect x="264" y="162" width="4" height="1" fill="#000"/><rect x="261" y="172" width="7" height="1" fill="#000"/><rect x="264" y="182" width="4" height="1" fill="#000"/><rect x="252" y="192" width="16" height="1" fill="#000"/><rect x="264" y="202" width="4" height="1" fill="#000"/><rect x="261" y="212" width="7" height="1" fill="#000"/><rect x="264" y="222" width="4" height="1" fill="#000"/><rect x="261" y="232" width="7" height="1" fill="#000"/><rect x="264" y="242" width="4" height="1" fill="#000"/><rect x="261" y="252" width="7" height="1" fill="#000"/><rect x="264" y="262" width="4" height="1" fill="#000"/><rect x="261" y="272" width="7" height="1" fill="#000"/><rect x="264" y="282" width="4" height="1" fill="#000"/><rect x="252" y="292" width="16" height="1" fill="#000"/><rect x="264" y="302" width="4" height="1" fill="#000"/><rect x="261" y="312" width="7" height="1" fill="#000"/><rect x="264" y="322" width="4" height="1" fill="#000"/><rect x="261" y="332" width="7" height="1" fill="#000"/><rect x="264" y="342" width="4" height="1" fill="#000"/><rect x="261" y="352" width="7" height="1" fill="#000"/><rect x="264" y="362" width="4" height="1" fill="#000"/><rect x="261" y="372" width="7" height="1" fill="#000"/><rect x="264" y="382" width="4" height="1" fill="#000"/><rect x="252" y="392" width="16" height="1" fill="#000"/><rect x="264" y="402" width="4" height="1" fill="#000"/><rect x="261" y="412" width="7" height="1" fill="#000"/><rect x="264" y="422" width="4" height="1" fill="#000"/><rect x="261" y="432" width="7" height="1" fill="#000"/><rect x="264" y="442" width="4" height="1" fill="#000"/><rect x="261" y="452" width="7" height="1" fill="#000"/><rect x="264" y="462" width="4" height="1" fill="#000"/><rect x="261" y="472" width="7" height="1" fill="#000"/><rect x="264" y="482" width="4" height="1" fill="#000"/><rect x="252" y="492" width="16" height="1" fill="#000"/><rect x="264" y="502" width="4" height="1" fill="#000"/><rect x="261" y="512" width="7" height="1" fill="#000"/><rect x="264" y="522" width="4" height="1" fill="#000"/><rect x="261" y="532" width="7" height="1" fill="#000"/><rect x="264" y="542" width="4" height="1" fill="#000"/><rect x="261" y="552" width="7" height="1" fill="#000"/><rect x="264" y="562" width="4" height="1" fill="#000"/><rect x="261" y="572" width="7" height="1" fill="#000"/><rect x="264" y="582" width="4" height="1" fill="#000"/><rect x="252" y="592" width="16" height="1" fill="#000"/><rect x="264" y="602" width="4" height="1" fill="#000"/><rect x="261" y="612" width="7" height="1" fill="#000"/><rect x="264" y="622" width="4" height="1" fill="#000"/><rect x="261" y="632" width="7" height="1" fill="#000"/><text x="252" y="203" font-size="11.5" font-family="Liberation Sans" fill="#000">0</text><text x="252" y="303" font-size="11.5" font-family="Liberation Sans" fill="#000">1</text><text x="252" y="314" font-size="11.5" font-family="Liberation Sans" fill="#000">0</text><text x="252" y="325" font-size="11.5" font-family="Liberation Sans" fill="#000">0</text><text x="252" y="403" font-size="11.5" font-family="Liberation Sans" fill="#000">2</text><text x="252" y="414" font-size="11.5" font-family="Liberation Sans" fill="#000">0</text><text x="252" y="425" font-size="11.5" font-family="Liberation Sans" fill="#000">0</text><text x="252" y="503" font-size="11.5" font-family="Liberation Sans" fill="#000">3</text><text x="252" y="514" font-size="11.5" font-family="Liberation Sans" fill="#000">0</text><text x="252" y="525" font-size="11.5" font-family="Liberation Sans" fill="#000">0</text><text x="252" y="603" font-size="11.5" font-family="Liberation Sans" fill="#000">4</text><text x="252" y="614" font-size="11.5" font-family="Liberation Sans" fill="#000">0</text><text x="252" y="625" font-size="11.5" font-family="Liberation Sans" fill="#000">0</text></svg>
<div style="left:270px;top:146px;width:492px;height:494px;background:#f0f0f0"></div>
<div style="left:316px;top:192px;width:400px;height:400px;background:conic-gradient(#666 25%,#999 0 50%,#666 0 75%,#999 0) 0 0/16px 16px"></div>
<svg style="left:316px;top:192px" width="400" height="400" viewBox="0 0 400 400">
<ellipse cx="114" cy="203" rx="88" ry="125" fill="#1212c4"/>
<rect x="144" y="168.5" width="239" height="157" fill="#e3c84b"/>
<text x="149" y="282.5" font-size="115" font-family="Liberation Sans" fill="#fff">Text</text>
<rect x="60" y="65" width="239" height="156" fill="#fe0808"/>
</svg>
<svg style="left:0px;top:0px" width="1248" height="703" viewBox="0 0 1248 703">
<rect x="316.5" y="192.5" width="399" height="399" fill="none" stroke="#ff9a20" stroke-width="1"/>
<rect x="316.5" y="192.5" width="399" height="399" fill="none" stroke="#000" stroke-width="1" stroke-dasharray="4 4"/>
<rect x="465.5" y="370.5" width="210" height="128" fill="none" stroke="#ffff00" stroke-width="1"/>
<rect x="465.5" y="370.5" width="210" height="128" fill="none" stroke="#000" stroke-width="1" stroke-dasharray="4 4"/>
<line x1="270" y1="392.5" x2="762" y2="392.5" stroke="#00c8ff" stroke-width="1"/>
<line x1="270" y1="392.5" x2="762" y2="392.5" stroke="#000" stroke-width="1" stroke-dasharray="3 3"/>
<line x1="516.5" y1="146" x2="516.5" y2="640" stroke="#00c8ff" stroke-width="1"/>
<line x1="516.5" y1="146" x2="516.5" y2="640" stroke="#000" stroke-width="1" stroke-dasharray="3 3"/>
</svg>
<div style="left:270px;top:639px;width:492px;height:1px;background:#fff"></div>
<div style="left:762px;top:146px;width:1px;height:494px;background:#fff"></div>
<div style="left:763px;top:146px;width:20px;height:495px;background:#f0f0f0"></div>
<div style="left:764px;top:164px;width:18px;height:455px;background:#cdcdcd"></div>
<svg style="left:767px;top:149px" width="13" height="10" viewBox="0 0 13 10"><path d="M2 8 L6.5 3 L11 8" fill="none" stroke="#555" stroke-width="2"/></svg>
<svg style="left:767px;top:623px" width="13" height="10" viewBox="0 0 13 10"><path d="M2 2 L6.5 7 L11 2" fill="none" stroke="#555" stroke-width="2"/></svg>
<div style="left:248px;top:641px;width:536px;height:20px;background:#f0f0f0"></div>
<div style="left:289px;top:642px;width:459px;height:18px;background:#cdcdcd"></div>
<svg style="left:251px;top:645px" width="13" height="13" viewBox="0 0 13 13"><rect x="1.5" y="1.5" width="10" height="10" fill="none" stroke="#999" stroke-dasharray="2 2"/></svg>
<svg style="left:272px;top:645px" width="10" height="13" viewBox="0 0 10 13"><path d="M8 2 L3 6.5 L8 11" fill="none" stroke="#555" stroke-width="2"/></svg>
<svg style="left:753px;top:645px" width="10" height="13" viewBox="0 0 10 13"><path d="M2 2 L7 6.5 L2 11" fill="none" stroke="#555" stroke-width="2"/></svg>
<svg style="left:770px;top:645px" width="13" height="13" viewBox="0 0 24 24"><path d="M12 0.8 L16 5 L13.2 5 L13.2 10.8 L19 10.8 L19 8 L23.2 12 L19 16 L19 13.2 L13.2 13.2 L13.2 19 L16 19 L12 23.2 L8 19 L10.8 19 L10.8 13.2 L5 13.2 L5 16 L0.8 12 L5 8 L5 10.8 L10.8 10.8 L10.8 5 L8 5Z" fill="#6a96d4" stroke="#22509a" stroke-width="1.1" stroke-linejoin="miter"/></svg>
<div style="left:248px;top:661px;width:536px;height:1px;background:#a0a0a0"></div>
<div style="left:248px;top:662px;width:536px;height:35px;background:#f0f0f0"></div>
<div style="left:341px;top:664px;width:51px;height:29px;background:#fff;border:1px solid #adadad"></div>
<div style="left:370px;top:664px;width:22px;height:29px;background:#e1e1e1;border:1px solid #adadad"></div>
<svg style="left:374px;top:674.5px" width="11" height="8" viewBox="0 0 11 8"><path d="M1 1.5 L5.5 6 L10 1.5" fill="none" stroke="#444" stroke-width="1"/></svg>
<span class="t" style="left:347px;top:672.92px;font-size:12.5px;color:#000;">px</span>
<div style="left:394px;top:664px;width:60px;height:29px;background:#fff;border:1px solid #adadad"></div>
<div style="left:436px;top:664px;width:18px;height:29px;background:#e1e1e1;border:1px solid #adadad"></div>
<svg style="left:440px;top:674.5px" width="11" height="8" viewBox="0 0 11 8"><path d="M1 1.5 L5.5 6 L10 1.5" fill="none" stroke="#444" stroke-width="1"/></svg>
<span class="t" style="left:400px;top:672.92px;font-size:12.5px;color:#000;">100 %</span>
<span class="t" style="left:457px;top:672.98px;font-size:14.2px;color:#000;">Text (22,7 MB)</span>
<div style="left:784px;top:64px;width:1px;height:633px;background:#d4d4d4"></div>
<div style="left:785px;top:64px;width:6px;height:633px;background:#f0f0f0"></div>
<div style="left:790px;top:64px;width:1px;height:633px;background:#fff"></div>
<div style="left:791px;top:64px;width:164px;height:633px;background:#f0f0f0"></div>
<div style="left:791px;top:63px;width:164px;height:1px;background:#fff"></div>
<div style="left:792px;top:65px;width:21px;height:24px;background:#fff;border:1px solid #d8d8d8;border-bottom:none"></div>
<div style="left:813px;top:66px;width:17px;height:22px;background:#ebebeb;border:1px solid #d8d8d8;border-left:none"></div>
<div style="left:830px;top:66px;width:19px;height:22px;background:#ebebeb;border:1px solid #d8d8d8;border-left:none"></div>
<svg style="left:795px;top:70px" width="15" height="14" viewBox="0 0 15 14"><path d="M2 2 h11 l-1 4 h-11Z M1 7 h12 M1 10 h12" fill="#ddd" stroke="#aaa" stroke-width="1.3"/></svg>
<svg style="left:814px;top:69px" width="15" height="16" viewBox="0 0 15 16"><path d="M1 10 Q3 2 8 3 Q13 4 12 12" fill="none" stroke="#3b6bb5" stroke-dasharray="1.5 1"/><circle cx="3" cy="8" r="1.3" fill="#222"/><circle cx="9" cy="2" r="1.3" fill="#222"/><circle cx="12" cy="10" r="1.3" fill="#222"/><path d="M6 14 L10 10" stroke="#222"/></svg>
<svg style="left:832px;top:69px" width="15" height="16" viewBox="0 0 15 16"><path d="M7 9 L13 2 L14 4 L9 11Z" fill="#c87533"/><path d="M2 15 Q3 9 7 9 L9 11 Q7 15 2 15Z" fill="#111"/></svg>
<div style="left:791px;top:88px;width:164px;height:609px;background:#fff"></div>
<div style="left:791px;top:88px;width:1px;height:609px;background:#d8d8d8"></div>
<span class="t" style="left:797px;top:96.09px;font-size:12.3px;color:#000;">Modus</span>
<span class="t" style="left:881px;top:96.09px;font-size:12.3px;color:#000;">Normal</span>
<div style="left:927px;top:92px;width:20px;height:19px;background:#e1e1e1;border:1px solid #adadad"></div>
<svg style="left:931px;top:98px" width="11" height="8" viewBox="0 0 11 8"><path d="M1 1.5 L5.5 6 L10 1.5" fill="none" stroke="#444" stroke-width="1"/></svg>
<svg style="left:949px;top:93px" width="6" height="18" viewBox="0 0 6 18"><circle cx="5" cy="6" r="4" fill="#e8c020"/><circle cx="5" cy="13" r="3" fill="#3b6bb5"/></svg>
<div style="left:795px;top:113px;width:160px;height:19px;background:#b9c4d0;border:1px solid #6a7480;border-right:none"></div>
<span class="t" style="left:798px;top:116.59px;font-size:12.3px;color:#000;">Deckkraft</span>
<span class="t" style="left:943px;top:116.59px;font-size:12.3px;color:#000;">10</span>
<span class="t" style="left:796px;top:137.09px;font-size:12.3px;color:#000;">Sperre:</span>
<svg style="left:838px;top:136px" width="13" height="13" viewBox="0 0 13 13"><path d="M6 8 L11 2 L12 3 L8 10Z" fill="#c87533"/><path d="M1 13 Q2 8 6 8 L8 10 Q6 13 1 13Z" fill="#111"/></svg>
<svg style="left:856px;top:135px" width="13" height="13" viewBox="0 0 24 24"><path d="M12 0.8 L16 5 L13.2 5 L13.2 10.8 L19 10.8 L19 8 L23.2 12 L19 16 L19 13.2 L13.2 13.2 L13.2 19 L16 19 L12 23.2 L8 19 L10.8 19 L10.8 13.2 L5 13.2 L5 16 L0.8 12 L5 8 L5 10.8 L10.8 10.8 L10.8 5 L8 5Z" fill="#6a96d4" stroke="#22509a" stroke-width="1.1" stroke-linejoin="miter"/></svg>
<div style="left:876px;top:136px;width:13px;height:12px;background:conic-gradient(#555 25%,#999 0 50%,#555 0 75%,#999 0) 0 0/6px 6px"></div>
<div style="left:795px;top:153px;width:160px;height:522px;background:#fff;border:1px solid #a0a0a0;border-right:none"></div>
<div style="left:797px;top:195px;width:158px;height:40px;background:#0078d7"></div>
<div style="left:798px;top:203px;width:26px;height:26px;border:1.5px dashed #f09030"></div>
<svg style="left:802px;top:170px" width="18" height="10" viewBox="0 0 18 10"><path d="M1.5 5 Q9 -2.5 16.5 5 Q9 12.5 1.5 5Z" fill="#fff" stroke="#8a8a8a" stroke-width="1.4"/><circle cx="9" cy="5" r="3.3" fill="#2d5aa8"/><circle cx="9" cy="5" r="1.6" fill="#0a1a40"/><circle cx="8" cy="3.8" r="1" fill="#fff"/></svg>
<div style="left:871px;top:157px;width:36px;height:37px;border:2px solid #000"></div>
<div style="left:873px;top:159px;width:32px;height:33px;background:conic-gradient(#666 25%,#999 0 50%,#666 0 75%,#999 0) 0 0/8px 8px"></div>
<div style="left:878px;top:164px;width:19px;height:13px;background:#f00"></div>
<span class="t" style="left:911px;top:169.59px;font-size:12.3px;color:#000;">Hintergrund</span>
<svg style="left:802px;top:210px" width="18" height="10" viewBox="0 0 18 10"><path d="M1.5 5 Q9 -2.5 16.5 5 Q9 12.5 1.5 5Z" fill="#fff" stroke="#8a8a8a" stroke-width="1.4"/><circle cx="9" cy="5" r="3.3" fill="#2d5aa8"/><circle cx="9" cy="5" r="1.6" fill="#0a1a40"/><circle cx="8" cy="3.8" r="1" fill="#fff"/></svg>
<div style="left:871px;top:197px;width:36px;height:37px;background:#0078d7;border:2px solid #fff"></div>
<svg style="left:874px;top:200px" width="31" height="31" viewBox="0 0 31 31"><path d="M4 28 L10 18 L30 18 L24 28Z" fill="#e8e8e8" stroke="#aaa"/><path d="M6 5 h18 v3 h-2 l-1 -2 h-5 v16 h-3 v-16 h-5 l-1 2 h-1Z" fill="#555"/></svg>
<span class="t" style="left:911px;top:209.59px;font-size:12.3px;color:#fff;">Text</span>
<svg style="left:802px;top:250px" width="18" height="10" viewBox="0 0 18 10"><path d="M1.5 5 Q9 -2.5 16.5 5 Q9 12.5 1.5 5Z" fill="#fff" stroke="#8a8a8a" stroke-width="1.4"/><circle cx="9" cy="5" r="3.3" fill="#2d5aa8"/><circle cx="9" cy="5" r="1.6" fill="#0a1a40"/><circle cx="8" cy="3.8" r="1" fill="#fff"/></svg>
<div style="left:871px;top:237px;width:36px;height:37px;border:2px solid #000"></div>
<div style="left:873px;top:239px;width:32px;height:33px;background:conic-gradient(#666 25%,#999 0 50%,#666 0 75%,#999 0) 0 0/8px 8px"></div>
<div style="left:885px;top:251px;width:19px;height:12px;background:#e0c84a"></div>
<span class="t" style="left:911px;top:249.59px;font-size:12.3px;color:#000;">neu</span>
<svg style="left:802px;top:290px" width="18" height="10" viewBox="0 0 18 10"><path d="M1.5 5 Q9 -2.5 16.5 5 Q9 12.5 1.5 5Z" fill="#fff" stroke="#8a8a8a" stroke-width="1.4"/><circle cx="9" cy="5" r="3.3" fill="#2d5aa8"/><circle cx="9" cy="5" r="1.6" fill="#0a1a40"/><circle cx="8" cy="3.8" r="1" fill="#fff"/></svg>
<div style="left:871px;top:277px;width:36px;height:37px;border:2px solid #000"></div>
<div style="left:873px;top:279px;width:32px;height:33px;background:conic-gradient(#666 25%,#999 0 50%,#666 0 75%,#999 0) 0 0/8px 8px"></div>
<svg style="left:873px;top:279px" width="33" height="33" viewBox="0 0 33 33"><ellipse cx="9.5" cy="16.5" rx="6" ry="9" fill="#1010c8"/></svg>
<span class="t" style="left:911px;top:289.59px;font-size:12.3px;color:#000;">neu #1</span>
<div style="left:791px;top:675px;width:164px;height:22px;background:#fff"></div>
<svg style="left:797px;top:678px" width="14" height="14" viewBox="0 0 14 14"><path d="M3 3 h6 l3 3 v7 h-9Z" fill="#eee" stroke="#999"/><path d="M3 0 v6 M0 3 h6" stroke="#000" stroke-width="1.5"/></svg>
<svg style="left:821px;top:678px" width="14" height="14" viewBox="0 0 14 14"><path d="M1 6 h5 l1 -1 h6 v8 h-12Z" fill="#6aa0dc" stroke="#3b6bb5"/><path d="M3 0 v6 M0 3 h6" stroke="#000" stroke-width="1.5"/></svg>
<svg style="left:846px;top:680px" width="14" height="10" viewBox="0 0 14 10"><path d="M2 8 L7 3 L12 8" fill="none" stroke="#f07000" stroke-width="2.4"/></svg>
<svg style="left:870px;top:680px" width="14" height="10" viewBox="0 0 14 10"><path d="M2 2 L7 7 L12 2" fill="none" stroke="#f07000" stroke-width="2.4"/></svg>
<svg style="left:894px;top:678px" width="14" height="14" viewBox="0 0 14 14"><rect x="3" y="3" width="10" height="10" fill="#bbb" stroke="#666"/><rect x="1" y="1" width="10" height="9" fill="#2c4a7a" stroke="#777"/></svg>
<svg style="left:917px;top:679px" width="15" height="12" viewBox="0 0 15 12"><path d="M1 5 h9 v5 h-9Z" fill="#ccc" stroke="#999"/><path d="M12 1 v8 M10 7 l2 3 l2 -3" stroke="#3b6bb5" stroke-width="1.3" fill="none"/></svg>
<svg style="left:942px;top:677px" width="13" height="15" viewBox="0 0 13 15"><rect x="1" y="1" width="11" height="10" fill="#ddd" stroke="#aaa"/><path d="M3 11 h9 v3 h-9Z" fill="#ccc"/></svg>
<div style="left:954px;top:64px;width:1px;height:633px;background:#a0a0a0"></div>
<div style="left:954px;top:0px;width:1px;height:703px;background:#979797"></div>
<div style="left:955px;top:0px;width:290px;height:703px;background:#f0f0f0"></div>
<div style="left:1244px;top:0px;width:2px;height:703px;background:#a8a8a8"></div>
<div style="left:1246px;top:0px;width:2px;height:703px;background:#8c8c8c"></div>
<div style="left:1246px;top:0px;width:2px;height:35px;background:#1a1a3a"></div>
<div style="left:1246px;top:35px;width:2px;height:668px;background:#c4c4c4"></div>
<div style="left:1246px;top:257px;width:2px;height:23px;background:#e0c020"></div>
<div style="left:1246px;top:305px;width:2px;height:10px;background:#e8d040"></div>
<div style="left:1246px;top:340px;width:2px;height:20px;background:#e0c020"></div>
<div style="left:1246px;top:372px;width:2px;height:18px;background:#2a7a3a"></div>
<div style="left:1246px;top:465px;width:2px;height:35px;background:#e8d020"></div>
<div style="left:1246px;top:622px;width:2px;height:16px;background:#e0c020"></div>
<div style="left:1246px;top:663px;width:2px;height:19px;background:#e8d020"></div>
<div style="left:955px;top:0px;width:288px;height:13px;background:#f0f0f0;border-right:1px solid #555"></div>
<div style="left:955px;top:12px;width:288px;height:2px;background:#1a1a1a"></div>
<svg style="left:1093px;top:3px" width="10" height="6" viewBox="0 0 10 6"><path d="M1 5.5 L5 1 L9 5.5Z" fill="#888"/></svg>
<svg style="left:961px;top:19.3px;" width="15" height="15" viewBox="0 0 15 15"><rect x="1.5" y="2.5" width="10" height="10" fill="#f4f4f4" stroke="#aaa"/><path d="M5 11 L6 8 L12 2 L14 4 L8 10Z" fill="#d8a030" stroke="#8a6010" stroke-width=".6"/></svg>
<span class="t" style="left:982px;top:20.27px;font-size:14.8px;color:#000;">Te<u>x</u>t auf der Leinwand bearbeiten</span>
<svg style="left:961px;top:43.3px;" width="15" height="15" viewBox="0 0 15 15"><rect x="1.5" y="2.5" width="10" height="10" fill="#f4f4f4" stroke="#aaa"/><path d="M5 11 L6 8 L12 2 L14 4 L8 10Z" fill="#d8a030" stroke="#8a6010" stroke-width=".6"/></svg>
<span class="t" style="left:982px;top:44.27px;font-size:14.8px;color:#000;">Ebenenei<u>g</u>enschaften …</span>
<span class="t" style="left:982px;top:68.27px;font-size:14.8px;color:#000;">Farbverlaufsraum</span>
<svg style="left:1229px;top:70.0px" width="6" height="9" viewBox="0 0 6 9"><path d="M0.5 0.5 L5.5 4.5 L0.5 8.5Z" fill="#000"/></svg>
<span class="t" style="left:982px;top:92.27px;font-size:14.8px;color:#000;">Kompositionsraum</span>
<svg style="left:1229px;top:94.0px" width="6" height="9" viewBox="0 0 6 9"><path d="M0.5 0.5 L5.5 4.5 L0.5 8.5Z" fill="#000"/></svg>
<span class="t" style="left:982px;top:116.27px;font-size:14.8px;color:#000;">Kompositionsmodus</span>
<svg style="left:1229px;top:118.0px" width="6" height="9" viewBox="0 0 6 9"><path d="M0.5 0.5 L5.5 4.5 L0.5 8.5Z" fill="#000"/></svg>
<span class="t" style="left:982px;top:140.27px;font-size:14.8px;color:#000;">Farbmarkierung</span>
<svg style="left:1229px;top:142.0px" width="6" height="9" viewBox="0 0 6 9"><path d="M0.5 0.5 L5.5 4.5 L0.5 8.5Z" fill="#000"/></svg>
<div style="left:960px;top:161px;width:284px;height:1px;background:#d7d7d7"></div>
<svg style="left:961px;top:171.3px;" width="15" height="15" viewBox="0 0 15 15"><path d="M3 3 h6 l3 3 v8 h-9Z" fill="#f4f4f4" stroke="#999"/><path d="M3 0 v6 M0 3 h6" stroke="#000" stroke-width="1.5"/></svg>
<span class="t" style="left:982px;top:172.27px;font-size:14.8px;color:#000;"><u>N</u>eue Ebene …</span>
<span class="t" style="left:982px;top:196.27px;font-size:14.8px;color:#000;">N<u>e</u>u aus Sichtbarem</span>
<svg style="left:961px;top:219.3px;" width="15" height="15" viewBox="0 0 15 15"><path d="M1 6 h5 l1 -1 h7 v9 h-13Z" fill="#6aa0dc" stroke="#3b6bb5" stroke-width=".8"/><path d="M3 0 v6 M0 3 h6" stroke="#000" stroke-width="1.5"/></svg>
<span class="t" style="left:982px;top:220.27px;font-size:14.8px;color:#000;">Neue Ebenen<u>g</u>ruppe</span>
<svg style="left:961px;top:243.3px;" width="15" height="15" viewBox="0 0 15 15"><rect x="4" y="4" width="10" height="10" fill="#aaa" stroke="#555"/><rect x="1" y="1" width="10" height="9" fill="#2c4a7a" stroke="#666"/><rect x="3" y="3" width="4" height="3" fill="#8ab"/></svg>
<span class="t" style="left:982px;top:244.27px;font-size:14.8px;color:#000;">Ebene <u>d</u>uplizieren</span>
<svg style="left:961px;top:267.3px;" width="15" height="15" viewBox="0 0 15 15"><path d="M1 6 Q1 4 4 4 h7 v6 h-10Z" fill="#ccc" stroke="#999"/><path d="M12 2 v8 M10 8 l2 3 l2 -3" stroke="#3b6bb5" stroke-width="1.3" fill="none"/></svg>
<span class="t" style="left:982px;top:268.27px;font-size:14.8px;color:#000;">Nach un<u>t</u>en vereinen</span>
<svg style="left:961px;top:291.3px;" width="15" height="15" viewBox="0 0 15 15"><path d="M3 3 L12 12 M12 3 L3 12" stroke="#c01818" stroke-width="2.8"/></svg>
<span class="t" style="left:982px;top:292.27px;font-size:14.8px;color:#000;">Ebene <u>l</u>öschen</span>
<div style="left:960px;top:313px;width:284px;height:1px;background:#d7d7d7"></div>
<svg style="left:961px;top:323.3px;" width="15" height="15" viewBox="0 0 15 15"><path d="M0.5 14 L5.5 1 L9.5 1 L14.5 14 L11 14 L10 11 L5 11 L4 14Z M6 8 L9 8 L7.5 4Z" fill="#222" fill-rule="evenodd"/></svg>
<span class="t" style="left:982px;top:324.27px;font-size:14.8px;color:#000;">Te<u>x</u>tinformationen verwerfen</span>
<svg style="left:961px;top:347.3px;" width="15" height="15" viewBox="0 0 15 15"><path d="M0.5 14 L5.5 1 L9.5 1 L14.5 14 L11 14 L10 11 L5 11 L4 14Z M6 8 L9 8 L7.5 4Z" fill="#222" fill-rule="evenodd"/></svg>
<span class="t" style="left:982px;top:348.27px;font-size:14.8px;color:#000;"><u>P</u>fad aus Text</span>
<svg style="left:961px;top:371.3px;" width="15" height="15" viewBox="0 0 15 15"><path d="M0.5 14 L5.5 1 L9.5 1 L14.5 14 L11 14 L10 11 L5 11 L4 14Z M6 8 L9 8 L7.5 4Z" fill="#222" fill-rule="evenodd"/></svg>
<span class="t" style="left:982px;top:372.27px;font-size:14.8px;color:#000;">Text am Pfad entlan<u>g</u></span>
<div style="left:960px;top:393px;width:284px;height:1px;background:#d7d7d7"></div>
<svg style="left:961px;top:403.3px;" width="15" height="15" viewBox="0 0 15 15"><rect x="1" y="1" width="8" height="7" fill="#3b6bb5"/><rect x="1" y="1" width="13" height="13" fill="none" stroke="#999" stroke-dasharray="1.5 1.5"/><path d="M11 8 v6 M8 11 h6" stroke="#222"/></svg>
<span class="t" style="left:982px;top:404.27px;font-size:14.8px;color:#000;">Ebenen<u>g</u>röße …</span>
<svg style="left:961px;top:427.3px;" width="15" height="15" viewBox="0 0 15 15"><rect x="1" y="1" width="13" height="13" fill="none" stroke="#3b6bb5" stroke-dasharray="2.5 6"/><rect x="4.5" y="4.5" width="6" height="6" fill="#f4f4f4" stroke="#999"/></svg>
<span class="t" style="left:982px;top:428.27px;font-size:14.8px;color:#000;">Ebene auf <u>B</u>ildgröße</span>
<svg style="left:961px;top:451.3px;" width="15" height="15" viewBox="0 0 15 15"><rect x="1" y="1" width="8" height="7" fill="#3b6bb5"/><rect x="1" y="1" width="13" height="13" fill="none" stroke="#999" stroke-dasharray="1.5 1.5"/><path d="M6 6 L13 13 M13 9 v4 h-4" stroke="#222" fill="none"/></svg>
<span class="t" style="left:982px;top:452.27px;font-size:14.8px;color:#000;">Ebene <u>s</u>kalieren …</span>
<div style="left:960px;top:473px;width:284px;height:1px;background:#d7d7d7"></div>
<svg style="left:961px;top:483.3px;" width="15" height="15" viewBox="0 0 15 15"><rect x="1" y="1" width="11" height="10" fill="#ddd" stroke="#aaa"/><rect x="3" y="6" width="11" height="7" fill="#ccc" stroke="#bbb"/></svg>
<span class="t" style="left:982px;top:484.27px;font-size:14.8px;color:#000;">Ebenenmaske <u>h</u>inzufügen …</span>
<span class="t" style="left:982px;top:508.27px;font-size:14.8px;color:#6d6d6d;">Ebenenmaske an<u>w</u>enden</span>
<svg style="left:961px;top:531.3px;" width="15" height="15" viewBox="0 0 15 15"><path d="M3 3 L12 12 M12 3 L3 12" stroke="#9a3030" stroke-width="2.6"/></svg>
<span class="t" style="left:982px;top:532.27px;font-size:14.8px;color:#6d6d6d;">Ebenenmaske lös<u>c</u>hen</span>
<div style="left:960px;top:553px;width:284px;height:1px;background:#d7d7d7"></div>
<span class="t" style="left:982px;top:564.27px;font-size:14.8px;color:#6d6d6d;">E<u>b</u>enenmaske anzeigen</span>
<span class="t" style="left:982px;top:588.27px;font-size:14.8px;color:#6d6d6d;">Ebenen<u>m</u>aske bearbeiten</span>
<span class="t" style="left:982px;top:612.27px;font-size:14.8px;color:#6d6d6d;">Ebenenmaske <u>d</u>eaktivieren</span>
<svg style="left:961px;top:635.3px;" width="15" height="15" viewBox="0 0 15 15"><rect x="1" y="2" width="12" height="11" fill="#c89090"/><path d="M1 5 h12 M1 8 h12 M1 11 h12 M4 2 v11 M7 2 v11 M10 2 v11" stroke="#e0b0b0" stroke-width=".8"/></svg>
<span class="t" style="left:982px;top:636.27px;font-size:14.8px;color:#6d6d6d;">Auswahl aus <u>M</u>aske</span>
<div style="left:960px;top:657px;width:284px;height:1px;background:#d7d7d7"></div>
<svg style="left:961px;top:667.3px;" width="15" height="15" viewBox="0 0 15 15"><rect x="1" y="1" width="13" height="12" fill="#444"/><path d="M1 4 h13 M1 7 h13 M1 10 h13 M4 1 v12 M7 1 v12 M10 1 v12" stroke="#888" stroke-width=".8"/></svg>
<span class="t" style="left:982px;top:668.27px;font-size:14.8px;color:#6d6d6d;">Alphakanal hin<u>z</u>ufügen</span>
<span class="t" style="left:982px;top:692.27px;font-size:14.8px;color:#000;">Alphakanal entfernen</span>
<div style="left:948px;top:258px;width:180px;height:33px;border:3px solid #ee1111"></div>
<div style="left:0px;top:697px;width:955px;height:6px;background:#aaaaaa"></div>
<div style="left:0px;top:697px;width:955px;height:1px;background:#5a5a5a"></div>
<div style="left:0px;top:697px;width:3px;height:6px;background:#1a2a5a"></div>
<div style="left:3px;top:698px;width:1px;height:5px;background:#e8e8e8"></div>
</body></html>
